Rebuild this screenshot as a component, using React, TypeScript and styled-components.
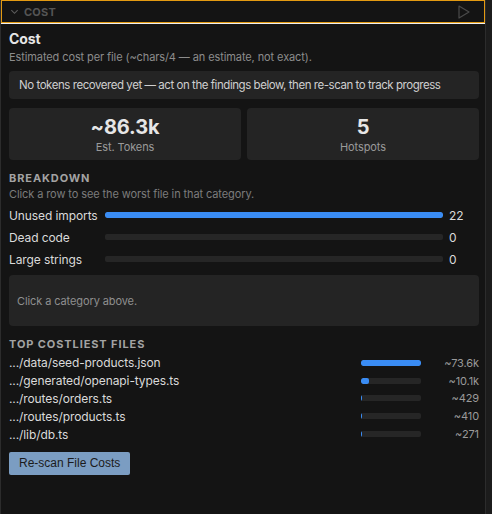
import React from "react";
import styled, { createGlobalStyle } from "styled-components";

const GlobalStyle = createGlobalStyle`
  html, body {
    margin: 0;
    padding: 0;
    background: #1c1c1c;
  }
  body {
    font-family: Inter, "Noto Sans", sans-serif;
    color: #d6d6d6;
  }
`;

type Category = { name: string; count: number };
type CostFile = { path: string; tokens: number; label: string };

const categories: Category[] = [
  { name: "Unused imports", count: 22 },
  { name: "Dead code", count: 0 },
  { name: "Large strings", count: 0 },
];

const files: CostFile[] = [
  { path: ".../data/seed-products.json", tokens: 73600, label: "~73.6k" },
  { path: ".../generated/openapi-types.ts", tokens: 10100, label: "~10.1k" },
  { path: ".../routes/orders.ts", tokens: 429, label: "~429" },
  { path: ".../routes/products.ts", tokens: 410, label: "~410" },
  { path: ".../lib/db.ts", tokens: 271, label: "~271" },
];

const Chevron = () => (
  <svg width="9" height="9" viewBox="0 0 10 10" fill="none">
    <path d="M1.5 3.5 L5 7 L8.5 3.5" stroke="#5c5c5c" strokeWidth="1.2" />
  </svg>
);

const PlayIcon = () => (
  <svg width="12" height="14" viewBox="0 0 12 14" fill="none">
    <path d="M1 1 L11 7 L1 13 Z" stroke="#4a4a4a" strokeWidth="1.2" strokeLinejoin="round" />
  </svg>
);

const CostPanel = () => {
  const maxCount = Math.max(...categories.map((c) => c.count), 1);
  const maxTokens = Math.max(...files.map((f) => f.tokens), 1);

  return (
    <Shell>
      <Pane>
        <Header>
          <Chevron />
          <HeaderTitle>COST</HeaderTitle>
          <HeaderSpacer />
          <PlayIcon />
        </Header>
        <Divider />
        <Body>
          <Title>Cost</Title>
          <Muted>Estimated cost per file (~chars/4 — an estimate, not exact).</Muted>

          <Notice>No tokens recovered yet — act on the findings below, then re-scan to track progress</Notice>

          <Stats>
            <StatCard>
              <StatValue>~86.3k</StatValue>
              <StatLabel>Est. Tokens</StatLabel>
            </StatCard>
            <StatCard>
              <StatValue>5</StatValue>
              <StatLabel>Hotspots</StatLabel>
            </StatCard>
          </Stats>

          <SectionTitle>BREAKDOWN</SectionTitle>
          <Hint>Click a row to see the worst file in that category.</Hint>
          <CategoryList>
            {categories.map((c) => (
              <CategoryRow key={c.name}>
                <CategoryName>{c.name}</CategoryName>
                <Track>
                  <Fill style={{ width: `${(c.count / maxCount) * 100}%` }} />
                </Track>
                <Count>{c.count}</Count>
              </CategoryRow>
            ))}
          </CategoryList>

          <DetailBox>Click a category above.</DetailBox>

          <SectionTitle>TOP COSTLIEST FILES</SectionTitle>
          <FileList>
            {files.map((f) => (
              <FileRow key={f.path}>
                <FilePath>{f.path}</FilePath>
                <FileTrack>
                  <Fill style={{ width: `${Math.max((f.tokens / maxTokens) * 100, 1.5)}%` }} />
                </FileTrack>
                <FileTokens>{f.label}</FileTokens>
              </FileRow>
            ))}
          </FileList>

          <RescanButton>Re-scan File Costs</RescanButton>
        </Body>
      </Pane>
    </Shell>
  );
};

export default function App() {
  return (
    <>
      <GlobalStyle />
      <CostPanel />
    </>
  );
}

const Shell = styled.div`
  display: flex;
  width: 492px;
  height: 514px;
  background: #1c1c1c;
`;

const Pane = styled.div`
  width: 486px;
  height: 514px;
  background: #141414;
  border-left: 1px solid #2c2c2c;
  border-right: 1px solid #2c2c2c;
  box-sizing: border-box;
  display: flex;
  flex-direction: column;
`;

const Header = styled.div`
  height: 22px;
  box-sizing: border-box;
  border: 1px solid #e39a12;
  border-bottom: none;
  display: flex;
  align-items: center;
  gap: 5px;
  padding: 0 14px 0 8px;
`;

const HeaderTitle = styled.span`
  font-size: 11px;
  font-weight: 700;
  color: #555555;
  letter-spacing: 0.2px;
`;

const HeaderSpacer = styled.div`
  flex: 1;
`;

const Divider = styled.div`
  height: 1px;
  background: #e39a12;
  border-bottom: 1px solid #f0f0f0;
`;

const Body = styled.div`
  padding: 6px 6px 0 8px;
  display: flex;
  flex-direction: column;
  letter-spacing: -0.1px;
`;

const Title = styled.div`
  font-size: 14px;
  font-weight: 700;
  color: #e6e6e6;
  line-height: 17px;
`;

const Muted = styled.div`
  font-size: 11px;
  color: #8c8c8c;
  line-height: 14px;
  margin-top: 3px;
`;

const Notice = styled.div`
  margin-top: 7px;
  background: #242424;
  border-radius: 4px;
  height: 28px;
  display: flex;
  align-items: center;
  padding: 0 10px;
  font-size: 11.5px;
  letter-spacing: -0.45px;
  white-space: nowrap;
  color: #cfcfcf;
`;

const Stats = styled.div`
  margin-top: 9px;
  display: grid;
  grid-template-columns: 1fr 1fr;
  gap: 6px;
`;

const StatCard = styled.div`
  background: #242424;
  border-radius: 4px;
  height: 52px;
  display: flex;
  flex-direction: column;
  align-items: center;
  justify-content: center;
`;

const StatValue = styled.div`
  font-size: 20px;
  font-weight: 700;
  color: #e6e6e6;
  line-height: 24px;
`;

const StatLabel = styled.div`
  font-size: 11px;
  color: #9a9a9a;
  line-height: 14px;
  margin-top: 1px;
`;

const SectionTitle = styled.div`
  margin-top: 11px;
  font-size: 11px;
  font-weight: 700;
  letter-spacing: 0.9px;
  color: #a3a3a3;
  line-height: 14px;
`;

const Hint = styled.div`
  font-size: 11px;
  color: #7c7c7c;
  line-height: 14px;
  margin-top: 2px;
`;

const CategoryList = styled.div`
  margin-top: 3px;
  display: flex;
  flex-direction: column;
`;

const CategoryRow = styled.div`
  display: grid;
  grid-template-columns: 90px 1fr 30px;
  align-items: center;
  height: 22px;
  column-gap: 6px;
`;

const CategoryName = styled.span`
  font-size: 12px;
  color: #dadada;
`;

const Track = styled.div`
  height: 6px;
  background: #262626;
  border-radius: 2px;
  overflow: hidden;
`;

const FileTrack = styled(Track)`
  width: 60px;
`;

const Fill = styled.div`
  height: 100%;
  background: #3a8cf4;
  border-radius: 2px;
`;

const Count = styled.span`
  font-size: 12px;
  color: #dadada;
`;

const DetailBox = styled.div`
  margin-top: 5px;
  height: 51px;
  background: #242424;
  border-radius: 4px;
  display: flex;
  align-items: center;
  padding: 0 8px;
  font-size: 11px;
  color: #8f8f8f;
`;

const FileList = styled.div`
  margin-top: 3px;
  display: flex;
  flex-direction: column;
`;

const FileRow = styled.div`
  display: grid;
  grid-template-columns: 1fr 60px 58px;
  align-items: center;
  height: 17.8px;
`;

const FilePath = styled.span`
  font-size: 12px;
  color: #dadada;
`;

const FileTokens = styled.span`
  font-size: 11px;
  color: #9a9a9a;
  text-align: right;
`;

const RescanButton = styled.button`
  margin-top: 9px;
  align-self: flex-start;
  background: #7b9dc2;
  border: none;
  border-radius: 2px;
  height: 23px;
  padding: 0 10px;
  font-family: "Liberation Sans", Arial, sans-serif;
  font-size: 12px;
  letter-spacing: 0;
  color: #1b1b1b;
  cursor: pointer;
`;
